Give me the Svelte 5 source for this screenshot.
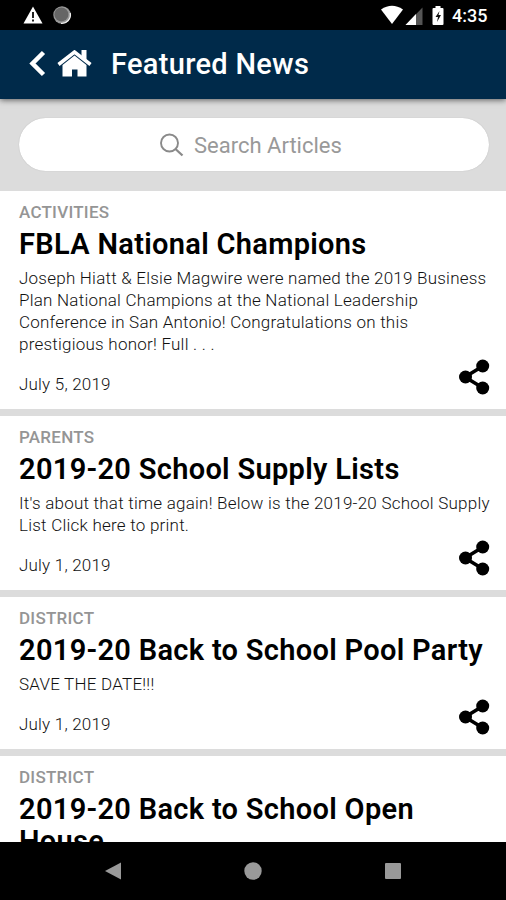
<script>
  let search = '';

  const articles = [
    {
      category: 'Activities',
      title: 'FBLA National Champions',
      lines: [
        'Joseph Hiatt & Elsie Magwire were named the 2019 Business',
        'Plan National Champions at the National Leadership',
        'Conference in San Antonio! Congratulations on this',
        'prestigious honor! Full . . .'
      ],
      date: 'July 5, 2019'
    },
    {
      category: 'Parents',
      title: '2019-20 School Supply Lists',
      lines: [
        "It's about that time again! Below is the 2019-20 School Supply",
        'List Click here to print.'
      ],
      date: 'July 1, 2019'
    },
    {
      category: 'District',
      title: '2019-20 Back to School Pool Party',
      lines: ['SAVE THE DATE!!!'],
      date: 'July 1, 2019'
    },
    {
      category: 'District',
      title: '2019-20 Back to School Open House',
      lines: []
    }
  ];
</script>

<div class="screen">
  <div class="status-bar">
    <svg class="left-icons" width="50" height="20" viewBox="0 0 50 20">
      <path d="M10 1.5L19.5 18.5H0.5Z" fill="#fff" />
      <path d="M10 7v6M10 14.5v2" stroke="#222" stroke-width="2" />
      <circle cx="39" cy="10" r="8.7" fill="#999" />
      <path d="M47.2 8A8.5 8.5 0 0 1 38 18.3" fill="none" stroke="#eee" stroke-width="1.3" />
      <circle cx="38.4" cy="9.4" r="7" fill="#666" />
    </svg>
    <svg width="64" height="20" viewBox="0 0 64 20">
      <path d="M0 4.5Q11 -3 22 4.5L11 19Z" fill="#fff" />
      <path d="M41.5 2.5V20H24.5Z" fill="#555" />
      <path d="M35 9V20H24.5Z" fill="#fff" />
      <path d="M54.500 1h5v2h2q1 0 1 1v15q0 1-1 1H52.500q-1 0-1-1V4q0-1 1-1h2z" fill="#fff" />
      <path d="M58.500 6l-4 6h2.500l-1 5 4-7H57.500z" fill="#111" />
    </svg>
    <span class="clock">4:35</span>
  </div>

  <header>
    <svg class="back" width="18" height="28" viewBox="0 0 18 28">
      <path d="M15.5 2.500L4.500 13.500L15.500 24.500" fill="none" stroke="#fff" stroke-width="4.5" />
    </svg>
    <svg class="home" width="36" height="28" viewBox="0 0 36 28">
      <path d="M1.5 14.500L17.500 2L33.500 14.500" fill="none" stroke="#fff" stroke-width="3.5" />
      <path d="M24.500 0h5v10l-5-4z" fill="#fff" />
      <path d="M5.500 15L17.500 5.500L29.500 15V26.500H20.500V19.500H15V26.500H5.500Z" fill="#fff" />
    </svg>
    <h1>Featured News</h1>
  </header>

  <div class="search-area">
    <label class="search">
      <svg width="24" height="24" viewBox="0 0 24 24">
        <circle cx="9.5" cy="10" r="8.5" fill="none" stroke="#8a8a8a" stroke-width="1.9" />
        <path d="M15.5 16L22.5 22.5" stroke="#8a8a8a" stroke-width="2.3" />
      </svg>
      <input type="text" placeholder="Search Articles" bind:value={search} />
    </label>
  </div>

  <main>
    {#each articles as article}
      <article>
        <div class="category">{article.category}</div>
        <h2>{article.title}</h2>
        <div class="summary">
          {#each article.lines as line}
            <p>{line}</p>
          {/each}
        </div>
        {#if article.date}
          <div class="footer">
            <span class="date">{article.date}</span>
            <svg width="32" height="36" viewBox="0 0 32 36">
              <path d="M25 7L7 18L25 29" fill="none" stroke="#000" stroke-width="3.6" />
              <circle cx="24.7" cy="7" r="6.5" />
              <circle cx="7.5" cy="18" r="6.5" />
              <circle cx="24.7" cy="29" r="6.5" />
            </svg>
          </div>
        {/if}
      </article>
    {/each}
  </main>

  <nav>
    <svg width="18" height="20" viewBox="0 0 18 20"><path d="M1 10L17 1.5V18.5Z" fill="#999" /></svg>
    <svg width="18" height="18" viewBox="0 0 18 18"><circle cx="9" cy="9" r="8.7" fill="#999" /></svg>
    <svg width="18" height="18" viewBox="0 0 18 18"><rect x="1" y="1" width="16" height="16" rx="1" fill="#999" /></svg>
  </nav>
</div>

<style>
  :global(body) {
    margin: 0;
  }

  .screen {
    display: flex;
    flex-direction: column;
    height: 900px;
    overflow: hidden;
    background: #fff;
    color: #000;
    font-family: Roboto, sans-serif;
  }

  .status-bar {
    display: flex;
    align-items: center;
    flex: none;
    box-sizing: border-box;
    height: 30px;
    padding: 0 18px 0 23px;
    background: #000;
  }

  .left-icons {
    margin-right: auto;
  }

  .clock {
    width: 36px;
    margin-left: 7px;
    padding-top: 2px;
    color: #fff;
    font-size: 18px;
    font-weight: 500;
    line-height: 30px;
    white-space: nowrap;
  }

  header {
    display: flex;
    align-items: center;
    flex: none;
    box-sizing: border-box;
    height: 69px;
    padding: 0 0 2px 28px;
    background: #002a4a;
    box-shadow: 0 1px 6px rgba(0, 0, 0, 0.6);
    z-index: 1;
  }

  .home {
    margin-left: 11px;
  }

  h1 {
    margin: 0 0 0 18px;
    color: #fff;
    font-size: 29px;
    font-weight: 500;
    letter-spacing: 0.3px;
    line-height: 34px;
    white-space: nowrap;
  }

  .search-area {
    flex: none;
    box-sizing: border-box;
    height: 92px;
    padding: 19px 17px 0 19px;
    background: #dcdcdc;
  }

  .search {
    display: flex;
    align-items: center;
    justify-content: center;
    gap: 10px;
    height: 53px;
    border-radius: 27px;
    background: #fff;
    box-shadow: 0 0 1px #aaa;
  }

  input {
    width: 154px;
    padding: 1px 0 0;
    border: 0;
    outline: 0;
    background: none;
    font: 400 22px Roboto, sans-serif;
  }

  input::placeholder {
    color: #999;
    opacity: 1;
  }

  main {
    flex: 1;
    min-height: 0;
    overflow: hidden;
  }

  article {
    padding: 10px 16px 14px 19px;
    border-bottom: 7px solid #dcdcdc;
  }

  .category {
    color: #959595;
    font-size: 17px;
    font-weight: 500;
    letter-spacing: 0.25px;
    line-height: 22px;
    text-transform: uppercase;
  }

  h2 {
    margin: 5px -10px 7px 0;
    font-size: 29px;
    font-weight: 600;
    letter-spacing: 0.31px;
    line-height: 32px;
  }

  p {
    margin: 0;
    color: #111;
    font-size: 17px;
    font-weight: 300;
    letter-spacing: 0.23px;
    line-height: 22px;
    white-space: nowrap;
  }

  .footer {
    display: flex;
    align-items: flex-end;
    justify-content: space-between;
    height: 22px;
    margin-top: 18px;
  }

  .date {
    color: #111;
    font-size: 17px;
    font-weight: 300;
    letter-spacing: 0.2px;
    line-height: 22px;
  }

  nav {
    display: flex;
    align-items: center;
    justify-content: space-between;
    flex: none;
    box-sizing: border-box;
    height: 58px;
    padding: 0 104px;
    background: #000;
  }
</style>
